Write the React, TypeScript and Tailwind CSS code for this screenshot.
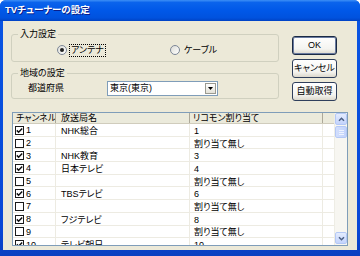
import React from 'react'

type Row = { ch: number; on: boolean; name: string; rc: string }

const rows: Row[] = [
  { ch: 1, on: true, name: 'NHK総合', rc: '1' },
  { ch: 2, on: false, name: '', rc: '割り当て無し' },
  { ch: 3, on: true, name: 'NHK教育', rc: '3' },
  { ch: 4, on: true, name: '日本テレビ', rc: '4' },
  { ch: 5, on: false, name: '', rc: '割り当て無し' },
  { ch: 6, on: true, name: 'TBSテレビ', rc: '6' },
  { ch: 7, on: false, name: '', rc: '割り当て無し' },
  { ch: 8, on: true, name: 'フジテレビ', rc: '8' },
  { ch: 9, on: false, name: '', rc: '割り当て無し' },
  { ch: 10, on: true, name: 'テレビ朝日', rc: '10' },
]

function GroupBox({ title, className, children }: { title: string; className: string; children: React.ReactNode }) {
  return (
    <div className={`relative border border-[#D0D0BF] rounded-[3px] flex items-center pt-[4px] ${className}`}>
      <span className="absolute left-[6px] -top-[7px] px-[2px] bg-[#ECE9D8] leading-[12px]">{title}</span>
      {children}
    </div>
  )
}

function Radio({ checked, label, focused }: { checked: boolean; label: string; focused?: boolean }) {
  return (
    <div className="flex items-center">
      <span className="w-[10px] h-[10px] rounded-full border border-[#7C8696] bg-[linear-gradient(135deg,#DCDCD6,#FFFFFF)] flex items-center justify-center">
        {checked && <span className="w-[4px] h-[4px] rounded-full bg-[#222]" />}
      </span>
      <span className={`ml-[2px] px-[1px] leading-[11px] border border-dotted ${focused ? 'border-black' : 'border-transparent'}`}>
        {label}
      </span>
    </div>
  )
}

function Button({ label, def }: { label: string; def?: boolean }) {
  return (
    <div
      className={`w-[45px] h-[19px] flex items-center justify-center whitespace-nowrap rounded-[3px] border bg-[linear-gradient(to_bottom,#FFFFFF,#F4F4F0_70%,#DCD8CC)] ${
        def ? 'border-[#1B2A44] shadow-[inset_0_0_0_1px_#6A7BA0]' : 'border-[#2F3F5C]'
      }`}
    >
      {label}
    </div>
  )
}

function Check({ on }: { on: boolean }) {
  return (
    <span className="w-[9px] h-[9px] border border-[#1A1A1A] bg-white flex items-center justify-center shrink-0">
      {on && (
        <svg width="7" height="7" viewBox="0 0 7 7">
          <path d="M0.8 3.4 L2.6 5.2 L6.2 1.4" stroke="#111" strokeWidth="1.5" fill="none" />
        </svg>
      )}
    </span>
  )
}

function Chevron({ down }: { down?: boolean }) {
  return (
    <svg width="7" height="5" viewBox="0 0 7 5">
      <path d={down ? 'M1 1.2 L3.5 3.7 L6 1.2' : 'M1 3.8 L3.5 1.3 L6 3.8'} stroke="#4D6185" strokeWidth="1.5" fill="none" />
    </svg>
  )
}

export default function App() {
  return (
    <div className="w-[360px] h-[256px] bg-white font-['Liberation_Sans','Noto_Sans_CJK_JP',sans-serif] [font-feature-settings:'palt'] text-[9px] text-black">
      <div className="w-full h-full rounded-t-[6px] overflow-hidden flex flex-col bg-[linear-gradient(to_bottom,#0A56E4,#0847D6_90%,#0A3FC0)]">
        {/* Title bar */}
        <div className="h-[21px] shrink-0 flex items-center px-[5px] bg-[linear-gradient(to_bottom,#3D8FF6_0%,#0A63EC_12%,#0058E8_50%,#0052DE_85%,#0042C4_100%)]">
          <span className="text-white font-bold text-[9.5px] [text-shadow:1px_1px_#0A1E8A]">TVチューナーの設定</span>
        </div>

        {/* Body */}
        <div className="flex-1 mx-[3px] mb-[6px] bg-[#ECE9D8] pl-[8px] flex flex-col">
          <div className="h-[78px] flex items-start shrink-0">
            <div className="w-[268px] flex flex-col">
              <GroupBox title="入力設定" className="mt-[13px] h-[28px] pl-[45px]">
                <div className="w-[113px]">
                  <Radio checked label="アンテナ" focused />
                </div>
                <Radio checked={false} label="ケーブル" />
              </GroupBox>
              <GroupBox title="地域の設定" className="mt-[11px] h-[26px] pl-[16px]">
                <span className="w-[79px] leading-[12px]">都道府県</span>
                <div className="w-[111px] h-[15px] border border-[#7F9DB9] bg-white flex items-center">
                  <span className="flex-1 pl-[2px] leading-[12px]">東京(東京)</span>
                  <span className="w-[11px] h-[11px] mr-[1px] border border-[#9A9A90] bg-[linear-gradient(to_bottom,#FFFFFF,#E4E2D8)] flex items-center justify-center">
                    <svg width="5" height="3" viewBox="0 0 5 3">
                      <path d="M0 0 H5 L2.5 3 Z" fill="#000" />
                    </svg>
                  </span>
                </div>
              </GroupBox>
            </div>
            <div className="ml-[13px] mt-[15px] flex flex-col gap-[4px]">
              <Button label="OK" def />
              <Button label="キャンセル" />
              <Button label="自動取得" />
            </div>
          </div>

          {/* Channel list */}
          <div className="mt-[13px] ml-[1px] w-[336px] h-[134px] border border-[#7F9DB9] bg-white flex overflow-hidden">
            <div className="w-[321px] flex flex-col overflow-hidden">
              <div className="h-[11px] shrink-0 flex bg-[#EBEADB] border-b border-[#D0CCBC]">
                <div className="w-[43px] pl-[3px] border-r border-[#ACA899] leading-[10px] whitespace-nowrap overflow-hidden">チャンネル</div>
                <div className="w-[134px] pl-[5px] border-r border-[#ACA899] leading-[10px]">放送局名</div>
                <div className="w-[133px] pl-[3px] border-r border-[#ACA899] leading-[10px]">リコモン割り当て</div>
                <div className="w-[11px]" />
              </div>
              {rows.map((r) => (
                <div key={r.ch} className="h-[12.7px] shrink-0 flex border-b border-[#EDEBE2]">
                  <div className="w-[43px] pl-[2px] pt-[1px] flex items-center gap-[2px] border-r border-[#EDEBE2]">
                    <Check on={r.on} />
                    <span className="leading-[10px]">{r.ch}</span>
                  </div>
                  <div className="w-[134px] pl-[5px] pt-[2px] flex items-center border-r border-[#EDEBE2] leading-[10px]">{r.name}</div>
                  <div className="w-[133px] pl-[4px] pt-[2px] flex items-center border-r border-[#EDEBE2] leading-[10px]">{r.rc}</div>
                  <div className="w-[11px]" />
                </div>
              ))}
            </div>

            {/* Scrollbar */}
            <div className="w-[13px] flex flex-col bg-[#F7F6F1] border-l border-[#EEEDE5]">
              <div className="h-[12px] rounded-[2px] border border-[#B4C8F6] bg-[linear-gradient(to_bottom,#E4ECFE,#C3D3FC)] flex items-center justify-center">
                <Chevron />
              </div>
              <div className="h-[12px] mt-[1px] rounded-[2px] border border-[#B4C8F6] bg-[linear-gradient(to_right,#D2DEFC,#C2D3FC)] flex flex-col items-center justify-center gap-[1px]">
                <span className="w-[5px] h-px bg-[#EEF3FF]" />
                <span className="w-[5px] h-px bg-[#EEF3FF]" />
                <span className="w-[5px] h-px bg-[#EEF3FF]" />
              </div>
              <div className="flex-1" />
              <div className="h-[12px] mb-[1px] rounded-[2px] border border-[#B4C8F6] bg-[linear-gradient(to_bottom,#E4ECFE,#C3D3FC)] flex items-center justify-center">
                <Chevron down />
              </div>
            </div>
          </div>
        </div>
      </div>
    </div>
  )
}
